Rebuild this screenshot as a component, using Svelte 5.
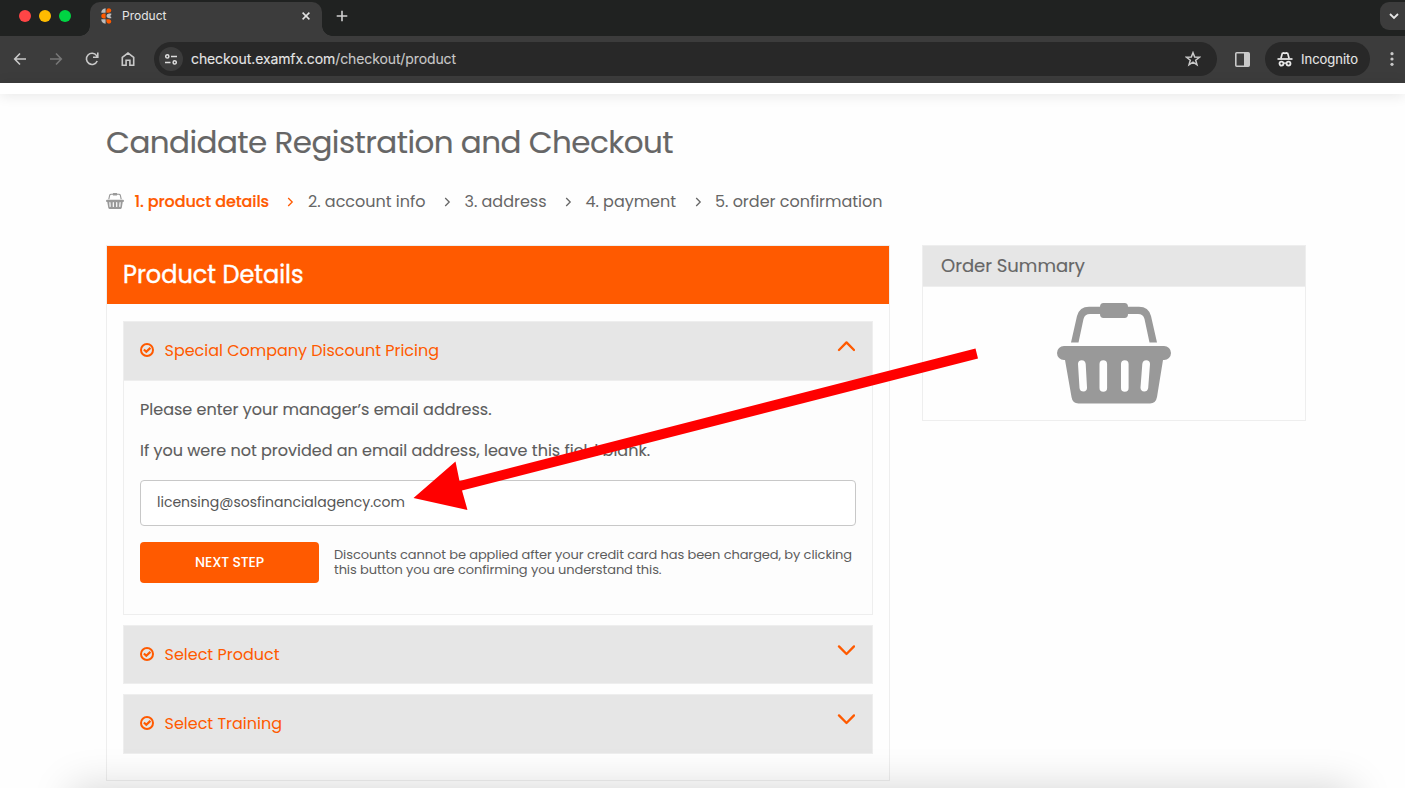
<script>
  const steps = [
    { label: '2. account info', w: 117.500 },
    { label: '3. address', w: 82 },
    { label: '4. payment', w: 90.500 },
    { label: '5. order confirmation', w: 167.500 }
  ];

  // Tracks a line of text out or in so that it spans the given width.
  function fit(node, width) {
    const natural = node.getBoundingClientRect().width;
    node.style.letterSpacing = (width - natural) / node.textContent.length + 'px';
  }
</script>

{#snippet basket()}
  <svg class="basket" viewBox="0 0 114 101" fill="#999">
    <path d="M14 39.500 20 13Q22.500 3.800 32 3.800H43Q43 0 46.500 0H67.500Q71 0 71 3.800H82Q91.500 3.800 94 13L100 39.500H92.500L87.500 16Q86.200 11 81 11H71Q71 15 67.500 15H46.500Q43 15 43 11H33Q27.800 11 26.500 16L21.500 39.500Z" />
    <path fill-rule="evenodd" d="M7 43H107A7 7 0 0 1 107 57H106L100 94Q98.800 100.500 93 100.500H21.500Q15.500 100.500 14.500 94L8 57H7A7 7 0 0 1 7 43ZM21 61 22.500 85Q23 88.500 26.500 88.500 30.200 88.200 30 84.500L28.700 61Q28.300 57.500 24.800 57.300 21 57.500 21 61ZM42.500 61V85A3.800 3.800 0 0 0 50.100 85V61A3.800 3.800 0 0 0 42.500 61ZM64 61V85A3.800 3.800 0 0 0 71.600 85V61A3.800 3.800 0 0 0 64 61ZM85.300 61 83.500 84.500Q83.500 88.200 87.200 88.500 90.500 88.500 91.200 85L93 61Q93 57.500 89.200 57.300 85.700 57.500 85.300 61Z" />
  </svg>
{/snippet}

{#snippet check()}
  <svg class="check" width="14" height="14" viewBox="0 0 14 14" fill="none" stroke="#ff5a00">
    <circle cx="7" cy="7" r="6" stroke-width="2" />
    <path d="M3.900 6.500 6.300 8.800 10.400 4.900" stroke-width="2.200" />
  </svg>
{/snippet}

{#snippet chevron(up)}
  <svg class="chev" width="18" height="11" viewBox="0 0 18 11" fill="none" stroke="#ff5a00" stroke-width="2.300" stroke-linecap="round" stroke-linejoin="round">
    <path d={up ? 'M2 9 9.500 1.400 17 9' : 'M2 1.400 9.500 9 17 1.400'} />
  </svg>
{/snippet}

<div class="window">
  <header class="chrome">
    <div class="tabs">
      <div class="lights"><i class="red"></i><i class="yellow"></i><i class="green"></i></div>
      <div class="tab">
        <svg class="favicon" width="11" height="16" viewBox="0 0 11 16">
          <path fill="#bdbdbd" d="M4.600.3V4.800H.3Q.2 1 4.600.3ZM10.300 5.400V6.500Q10 7.700 8.700 8 10 8.300 10.300 9.500V10.300H8Q5.600 10 5.400 8 5.600 5.700 8 5.400ZM4.600 11.200V15.700Q.2 15 .3 11.200Z" />
          <path fill="#ff5a00" d="M5.400 4.800V2.500Q5.600.4 8 .3 10.300.5 10.300 2.500 10.200 4.500 8 4.800ZM4.600 5.400V10.500H2.500Q.2 10.200.2 8 .2 5.700 2.500 5.400ZM5.400 11.200H8Q10.200 11.500 10.300 13.500 10.200 15.500 8 15.700 5.500 15.500 5.400 13.500Z" />
        </svg>
        <span class="tabname" use:fit={44.500}>Product</span>
        <svg class="close" width="8" height="8" viewBox="0 0 8 8" stroke="#e3e3e3" stroke-width="1.500"><path d="M.6.6 7.400 7.400M7.400.6.6 7.400" /></svg>
      </div>
      <svg class="plus" width="12" height="12" viewBox="0 0 12 12" stroke="#d0d0d0" stroke-width="1.600"><path d="M6 .7V11.300M.7 6H11.300" /></svg>
      <div class="tabsearch">
        <svg width="10" height="7" viewBox="0 0 10 7" fill="none" stroke="#e6e6e6" stroke-width="1.800"><path d="M1 1 5 5 9 1" /></svg>
      </div>
    </div>
    <div class="toolbar">
      <div class="nav">
        <svg width="14" height="14" viewBox="0 0 14 14" fill="none" stroke="#c9c9c9" stroke-width="1.600"><path d="M13 7H2M7 1.500 1.700 7 7 12.500" /></svg>
        <svg width="14" height="14" viewBox="0 0 14 14" fill="none" stroke="#777" stroke-width="1.600"><path d="M1 7H12M7 1.500 12.300 7 7 12.500" /></svg>
        <svg width="14" height="14" viewBox="0 0 14 14" fill="none" stroke="#c9c9c9" stroke-width="1.600"><path d="M12.200 9A5.600 5.600 0 1 1 11.600 3.600L12.600 5M12.800.6V5.200H8" /></svg>
        <svg width="14" height="14" viewBox="0 0 14 14" fill="none" stroke="#c9c9c9" stroke-width="1.600"><path d="M1.300 13.200V5.300L7 1 12.700 5.300V13.200H8.900V8.300H5.100V13.200Z" /></svg>
      </div>
      <div class="omnibox">
        <div class="tune">
          <svg width="12" height="11" viewBox="0 0 12 11" fill="none" stroke="#dedede" stroke-width="1.500"><circle cx="2.300" cy="2.400" r="1.600" /><path d="M6 2.400H12M0 8.400H5.500" /><circle cx="9.700" cy="8.400" r="1.600" /></svg>
        </div>
        <span class="url" use:fit={265}>checkout.examfx.com<b>/checkout/product</b></span>
        <svg class="star" width="16" height="16" viewBox="0 0 16 16" fill="none" stroke="#c9c9c9" stroke-width="1.500"><path d="M8 1.700 9.700 6.100 14.500 6.300 10.700 9.200 12 13.800 8 11.200 4 13.800 5.300 9.200 1.500 6.300 6.300 6.100Z" /></svg>
      </div>
      <svg class="side" width="15" height="15" viewBox="0 0 15 15"><rect x=".8" y=".8" width="13.400" height="13.400" rx="1" fill="none" stroke="#c9c9c9" stroke-width="1.600" /><path d="M9 1H14V14H9Z" fill="#c9c9c9" /></svg>
      <div class="incog">
        <svg width="16" height="15" viewBox="0 0 16 15" fill="none" stroke="#e8e8e8"><path d="M.5 7H15.500" stroke-width="1.700" /><path d="M3.900 6.500 5.300 1.300 6.600.9 8 1.400 9.400.9 10.700 1.300 12.100 6.500" stroke-width="1.700" /><circle cx="4.500" cy="11.600" r="2" stroke-width="1.800" /><circle cx="11.500" cy="11.600" r="2" stroke-width="1.800" /><path d="M6.700 11.300Q8 10.500 9.300 11.300" stroke-width="1.400" /></svg>
        <span use:fit={57}>Incognito</span>
      </div>
      <svg class="dots" width="4" height="14" viewBox="0 0 4 14" fill="#c9c9c9"><circle cx="2" cy="1.700" r="1.600" /><circle cx="2" cy="7" r="1.600" /><circle cx="2" cy="12.300" r="1.600" /></svg>
    </div>
  </header>

  <div class="sitebar"></div>

  <main>
    <h1><span use:fit={567}>Candidate Registration and Checkout</span></h1>
    <nav class="steps">
      {@render basket()}
      <strong use:fit={134.500}>1. product details</strong>
      <svg class="sep on" width="7" height="10" viewBox="0 0 7 10"><path d="M1.200 1 5.200 5 1.200 9" /></svg>
      {#each steps as step, i}
        <span use:fit={step.w}>{step.label}</span>
        {#if i < steps.length - 1}
          <svg class="sep" width="7" height="10" viewBox="0 0 7 10"><path d="M1.200 1 5.200 5 1.200 9" /></svg>
        {/if}
      {/each}
    </nav>

    <div class="columns">
      <section class="panel">
        <h2><span use:fit={180.500}>Product Details</span></h2>
        <div class="list">
          <article class="item open">
            <div class="head">{@render check()}<span use:fit={274.500}>Special Company Discount Pricing</span>{@render chevron(true)}</div>
            <div class="body">
              <p><span use:fit={351.500}>Please enter your manager’s email address.</span></p>
              <p><span use:fit={510}>If you were not provided an email address, leave this field blank.</span></p>
              <div class="field"><span use:fit={248}>licensing@sosfinancialagency.com</span></div>
              <div class="action">
                <button><span use:fit={69}>NEXT STEP</span></button>
                <small>
                  <span use:fit={518}>Discounts cannot be applied after your credit card has been charged, by clicking</span>
                  <span use:fit={327.500}>this button you are confirming you understand this.</span>
                </small>
              </div>
            </div>
          </article>
          <article class="item">
            <div class="head">{@render check()}<span use:fit={115}>Select Product</span>{@render chevron(false)}</div>
          </article>
          <article class="item last">
            <div class="head">{@render check()}<span use:fit={117.500}>Select Training</span>{@render chevron(false)}</div>
          </article>
        </div>
      </section>

      <aside>
        <h3><span use:fit={144}>Order Summary</span></h3>
        <div class="cart">{@render basket()}</div>
      </aside>
    </div>
  </main>

  <div class="dock"></div>
  <svg class="arrow" width="1405" height="788" viewBox="0 0 1405 788" fill="#f00">
    <path d="M413.500 498 455.500 461.500 459.500 481 975.500 348.500 978 358.500 462 490.500 467.500 510Z" />
  </svg>
</div>

<style>
  :global(body) { margin: 0; overflow: hidden; }
  .window {
    position: relative; width: 1405px; height: 788px; overflow: hidden; background: #fefefe;
    font-family: Poppins, Inter, sans-serif; color: #666; font-size: 16px;
  }
  .window :global(svg) { display: block; flex: none; }
  span, strong { white-space: nowrap; display: inline-block; }
  .chrome { font-family: Inter, sans-serif; color: #e6e6e6; }
  .tabs { height: 36px; background: #202221; display: flex; align-items: flex-start; }
  .lights { display: flex; gap: 8px; padding: 10px 0 0 19px; width: 90px; box-sizing: border-box; }
  .lights i { width: 12px; height: 12px; border-radius: 50%; flex: none; }
  .red { background: #ff4546; }
  .yellow { background: #ffbc00; }
  .green { background: #00d543; }
  .tab {
    position: relative; box-sizing: border-box; width: 232px; height: 34px; margin-top: 2px; padding: 0 12px 6px 11px;
    border-radius: 10px 10px 0 0; background: #3c3c3c; display: flex; align-items: center;
  }
  .tab::before, .tab::after { content: ''; position: absolute; bottom: 0; width: 10px; height: 10px; }
  .tab::before { left: -10px; background: radial-gradient(circle at 0 0, transparent 9.500px, #3c3c3c 10px); }
  .tab::after { right: -10px; background: radial-gradient(circle at 100% 0, transparent 9.500px, #3c3c3c 10px); }
  .tabname { margin: 0 0 2px 10px; font-size: 12px; }
  .close { margin-left: auto; }
  .plus { margin: 10px 0 0 14px; }
  .tabsearch {
    width: 25px; height: 28px; margin: 2px 0 0 auto; border-radius: 9px 0 0 9px; background: #3c3c3c;
    display: flex; align-items: center; padding-left: 9px; box-sizing: border-box;
  }
  .toolbar { height: 47px; background: #3c3c3c; display: flex; align-items: center; box-sizing: border-box; padding-bottom: 1px; }
  .nav { display: flex; gap: 22px; padding-left: 13px; width: 154px; box-sizing: border-box; }
  .omnibox { width: 1063px; height: 34px; border-radius: 17px; background: #282828; display: flex; align-items: center; box-sizing: border-box; padding: 0 16px 0 5px; }
  .tune { width: 24px; height: 24px; border-radius: 50%; background: #3c3c3c; display: grid; place-items: center; }
  .url { margin: 0 0 2px 8px; font-size: 14px; -webkit-text-stroke: .1px; }
  .url b { font-weight: 400; color: #c9c9c9; }
  .star { margin-left: auto; }
  .side { margin-left: 18px; }
  .incog { margin-left: 15px; width: 105px; height: 34px; border-radius: 17px; background: #282828; display: flex; align-items: center; padding-left: 12px; gap: 8px; box-sizing: border-box; font-size: 13px; -webkit-text-stroke: .1px; }
  .dots { margin-left: 20px; }
  .sitebar { height: 11px; background: #fff; box-shadow: 0 1px 14px rgba(0, 0, 0, .11); }
  main { padding: 0 99px 0 106px; }
  h1, h2, h3, p { margin: 0; font-weight: 400; }
  h1 { font-size: 31px; line-height: 48px; padding-top: 24px; -webkit-text-stroke: .15px; }
  .steps { display: flex; align-items: center; height: 24px; margin-top: 23px; }
  .steps :global(.basket) { width: 18px; height: 16px; margin-right: 10.500px; }
  .steps strong { color: #ff5a00; font-weight: 500; -webkit-text-stroke: .2px; }
  .sep { margin: 1px 13.500px 0 18.500px; fill: none; stroke: #666; stroke-width: 1.300; }
  .sep.on { margin: 1px 14px 0 18px; stroke: #ff5a00; }
  .columns { display: flex; justify-content: space-between; align-items: flex-start; margin-top: 32px; }
  .panel { width: 784px; height: 536px; box-sizing: border-box; border: 1px solid #eee; }
  h2 { height: 58px; box-sizing: border-box; padding-left: 16px; background: #ff5a00; color: #fff; font-size: 24px; line-height: 57px; -webkit-text-stroke: .4px; }
  .list { padding: 17px 16px 0; }
  .item { border: 1px solid #eee; box-sizing: border-box; height: 59px; margin-bottom: 10px; }
  .item.open { height: 294px; background: #fdfdfd; }
  .item.last { height: 60px; }
  .head { height: 57px; box-sizing: border-box; display: flex; align-items: center; padding: 0 17px 0 16px; background: #e6e6e6; color: #ff5a00; }
  .last .head { height: 58px; padding-bottom: 2px; }
  .open .head { height: 59px; border-bottom: 1px solid #eee; padding-bottom: 1px; }
  .head :global(.check) { margin-bottom: 1px; }
  .head span { margin-left: 10.500px; }
  .head :global(.chev) { margin: 0 0 8px auto; }
  .body { padding: 17px 16px 0; color: #5c5c5c; }
  .body p { line-height: 24px; margin-bottom: 17px; -webkit-text-stroke: .12px; }
  .field { height: 46px; box-sizing: border-box; border: 1px solid #c8c8c8; border-radius: 4px; background: #fff; padding: 0 16px; line-height: 42px; font-size: 14px; color: #555; }
  .action { display: flex; margin-top: 16px; }
  button { width: 179px; height: 41px; padding: 0; border: 0; border-radius: 4px; background: #ff5a00; color: #fff; font: 500 14px Poppins, Inter, sans-serif; }
  small { margin-left: 15px; padding-top: 5px; display: flex; flex-direction: column; align-items: flex-start; font-size: 13px; line-height: 15px; }
  aside { width: 384px; height: 176px; box-sizing: border-box; border: 1px solid #eee; }
  h3 { height: 41px; box-sizing: border-box; padding-left: 18px; border-bottom: 1px solid #eee; background: #e6e6e6; font-size: 18px; line-height: 40px; -webkit-text-stroke: .15px; }
  .cart { display: flex; justify-content: center; padding-top: 16px; }
  .cart :global(.basket) { width: 114px; height: 101px; }
  .dock { position: absolute; left: 80px; right: 60px; top: 796px; height: 40px; box-shadow: 0 0 40px 8px rgba(0, 0, 0, .17); }
  .arrow { position: absolute; left: 0; top: 0; pointer-events: none; }
</style>
